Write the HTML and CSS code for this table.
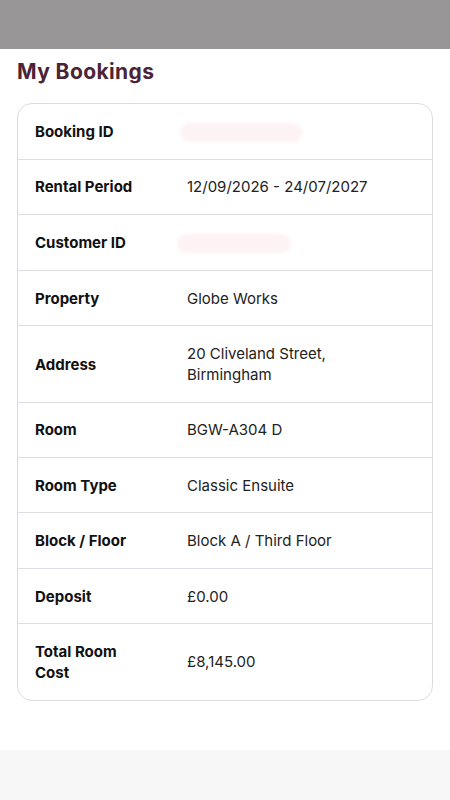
FILE: index.html
```html
<!DOCTYPE html>
<html lang="en">
<head>
  <meta charset="UTF-8">
  <title>My Bookings</title>
  <link rel="stylesheet" href="styles.css">
</head>
<body>

<div class="top-bar"></div>

<div class="page">
  <h1 class="page-title">My Bookings</h1>

  <div class="booking-card">
    <div class="booking-row">
      <div class="label">Booking ID</div>
      <div class="value"><span class="masked masked-long"></span></div>
    </div>
    <div class="booking-row">
      <div class="label">Rental Period</div>
      <div class="value">12/09/2026 - 24/07/2027</div>
    </div>
    <div class="booking-row">
      <div class="label">Customer ID</div>
      <div class="value"><span class="masked masked-short"></span></div>
    </div>
    <div class="booking-row">
      <div class="label">Property</div>
      <div class="value">Globe Works</div>
    </div>
    <div class="booking-row">
      <div class="label">Address</div>
      <div class="value">20 Cliveland Street,<br>Birmingham</div>
    </div>
    <div class="booking-row">
      <div class="label">Room</div>
      <div class="value">BGW-A304 D</div>
    </div>
    <div class="booking-row">
      <div class="label">Room Type</div>
      <div class="value">Classic Ensuite</div>
    </div>
    <div class="booking-row">
      <div class="label">Block / Floor</div>
      <div class="value">Block A / Third Floor</div>
    </div>
    <div class="booking-row">
      <div class="label">Deposit</div>
      <div class="value">£0.00</div>
    </div>
    <div class="booking-row">
      <div class="label">Total Room<br>Cost</div>
      <div class="value">£8,145.00</div>
    </div>
  </div>
</div>

<div class="bottom-bar"></div>

</body>
</html>
```

FILE: styles.css
```css
body {
  margin: 0;
  height: 100vh;
  display: flex;
  flex-direction: column;
  font-family: Inter, 'Noto Sans', sans-serif;
  background-color: #ffffff;
  color: #1a1a1a;
}
.top-bar {
  height: 49px;
  background-color: #979595; /* dim overlay grey */
}
.page {
  flex: 1;
  padding: 11px 17px 0 17px;
}
.page-title {
  margin: 0 0 19px 0;
  font-size: 21px;
  line-height: 24px;
  font-weight: 700;
  letter-spacing: 0.4px;
  color: #4b2438; /* plum */
}
.booking-card {
  border: 1px solid #dcdcdf;
  border-radius: 15px;
  overflow: hidden;
}
.booking-row {
  display: grid;
  grid-template-columns: 152px 1fr;
  align-items: center;
  padding: 16.7px 17px;
  border-bottom: 1px solid #dddde3;
  font-size: 15px;
  line-height: 21px;
}
.booking-row:last-child {
  border-bottom: none;
}
.label {
  font-weight: 700;
  color: #111111;
}
.value {
  color: #222222;
}
.masked {
  display: inline-block;
  height: 19px;
  margin-left: -7px;
  vertical-align: middle;
  border-radius: 10px;
  background-color: #fdf3f5;
  filter: blur(1.5px);
}
.masked-long {
  width: 122px;
}
.masked-short {
  width: 114px;
  margin-left: -10px;
}
.bottom-bar {
  height: 50px;
  background-color: #f7f7f8;
}
```
